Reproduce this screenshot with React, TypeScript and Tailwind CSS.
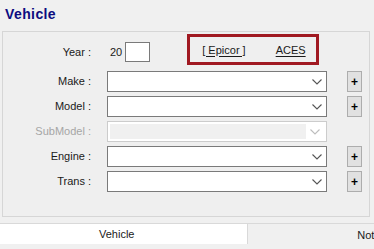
const rows = [
  { label: 'Make :', disabled: false, plus: true },
  { label: 'Model :', disabled: false, plus: true },
  { label: 'SubModel :', disabled: true, plus: false },
  { label: 'Engine :', disabled: false, plus: true },
  { label: 'Trans :', disabled: false, plus: true },
]

function Chevron({ disabled }: { disabled: boolean }) {
  return (
    <svg width="10" height="6" viewBox="0 0 10 6" className="shrink-0">
      <polyline
        points="0.5,0.5 5,5 9.5,0.5"
        fill="none"
        stroke={disabled ? '#bdbdbd' : '#555555'}
        strokeWidth="1.1"
      />
    </svg>
  )
}

function Combo({ disabled }: { disabled: boolean }) {
  if (disabled) {
    return (
      <div className="flex h-[21px] w-[220px] items-center border border-[#cccccc] bg-white p-[2px]">
        <div className="h-full w-[196px] bg-[#f0f0f0]" />
        <div className="flex flex-1 justify-center">
          <Chevron disabled />
        </div>
      </div>
    )
  }
  return (
    <div className="flex h-[21px] w-[220px] items-center justify-end border border-[#7a7a7a] bg-white pr-[4px]">
      <Chevron disabled={false} />
    </div>
  )
}

export default function App() {
  return (
    <div className="flex h-[249px] w-[374px] flex-col overflow-hidden bg-[#f0f0f0] font-['Liberation_Sans',Arial,sans-serif] text-[11px] text-[#1a1a1a]">
      <div className="h-[31px] pl-[5px] pt-[4px] text-[14px] font-bold tracking-[0.4px] text-[#0c0c80]">
        Vehicle
      </div>

      <div className="ml-[2px] h-[186px] w-[368px] border border-[#d6d6d6] bg-[#efefef] pt-[2px]">
        <div className="flex items-start">
          <div className="mt-[8px] flex items-center">
            <div className="w-[88px] pl-[1px] text-right">Year :</div>
            <div className="ml-[19px]">20</div>
            <div className="ml-[3px] h-[20px] w-[25px] border border-[#7a7a7a] bg-white" />
          </div>
          <div className="ml-[37px] flex h-[31px] w-[132px] items-center border-[3px] border-[#a01921] pl-[12px] pt-[1px]">
            <span className="underline underline-offset-2">[ Epicor ]</span>
            <span className="ml-[30px] underline underline-offset-2">ACES</span>
          </div>
        </div>

        <div className="mt-[6px] flex flex-col gap-[4px]">
          {rows.map((row) => (
            <div key={row.label} className="flex items-center">
              <div className={`w-[88px] text-right ${row.disabled ? 'text-[#a6a6a6]' : ''}`}>{row.label}</div>
              <div className="ml-[16px]">
                <Combo disabled={row.disabled} />
              </div>
              {row.plus && (
                <div className="ml-[20px] flex h-[21px] w-[15px] items-center justify-center border border-[#adadad] bg-[#e1e1e1] text-[12px] font-bold leading-none text-black">
                  +
                </div>
              )}
            </div>
          ))}
        </div>
      </div>

      <div className="mt-[6px] flex h-[21px] border-t border-[#d9d9d9]">
        <div className="flex h-[20px] w-[248px] items-center border-r border-[#d9d9d9] bg-white pl-[99px]">
          Vehicle
        </div>
        <div className="flex h-[20px] flex-1 items-center justify-end overflow-hidden pt-[2px] pr-0">
          <span className="-mr-[12px]">Notes</span>
        </div>
      </div>
    </div>
  )
}
